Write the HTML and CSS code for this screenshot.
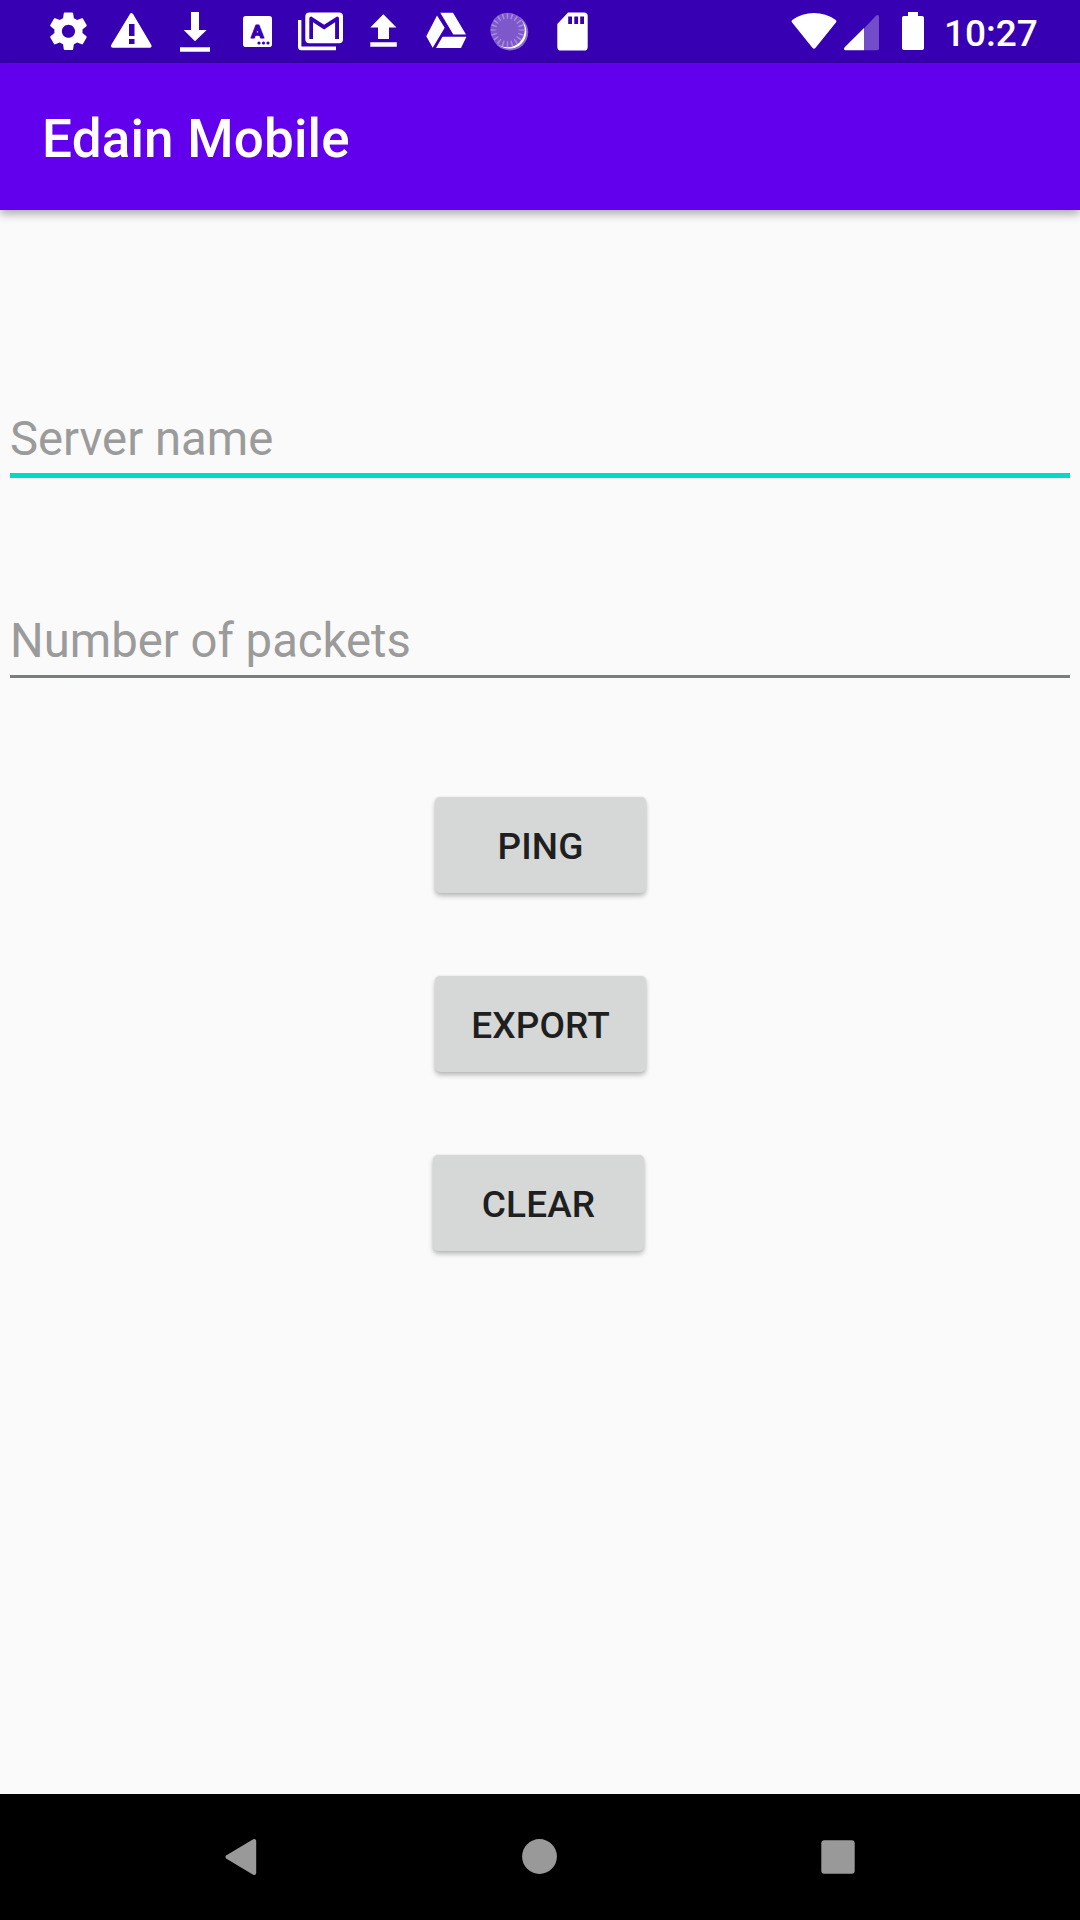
FILE: index.html
```html
<!DOCTYPE html>
<html lang="en">
<head>
<meta charset="utf-8">
<title>Edain Mobile</title>
<link rel="stylesheet" href="styles.css">
</head>
<body>
<div class="screen">
  <header class="status">
    <div class="notifications">
      <svg viewBox="0 0 63 63"><path transform="translate(8.9 8.7) scale(1.88)" d="M19.43 12.98c.04-.32.07-.64.07-.98s-.03-.66-.07-.98l2.11-1.65c.19-.15.24-.42.12-.64l-2-3.46c-.12-.22-.39-.3-.61-.22l-2.49 1c-.52-.4-1.08-.73-1.69-.98l-.38-2.65C14.46 2.18 14.25 2 14 2h-4c-.25 0-.46.18-.49.42l-.38 2.65c-.61.25-1.17.59-1.69.98l-2.49-1c-.23-.09-.49 0-.61.22l-2 3.46c-.13.22-.07.49.12.64l2.11 1.65c-.04.32-.07.65-.07.98s.03.66.07.98l-2.11 1.65c-.19.15-.24.42-.12.64l2 3.46c.12.22.39.3.61.22l2.49-1c.52.4 1.08.73 1.69.98l.38 2.65c.03.24.24.42.49.42h4c.25 0 .46-.18.49-.42l.38-2.65c.61-.25 1.17-.59 1.69-.98l2.49 1c.23.09.49 0 .61-.22l2-3.46c.12-.22.07-.49-.12-.64l-2.11-1.65zM12 15.5c-1.93 0-3.5-1.57-3.5-3.5s1.57-3.5 3.5-3.5 3.5 1.57 3.5 3.5-1.57 3.5-3.5 3.5z"/></svg>
      <svg viewBox="0 0 63 63"><path class="rounded" d="M31.5 15 49.8 46H12.7Z"/><path class="cut" d="M29 24h5.5v12H29zM29 39h5.5v5H29z"/></svg>
      <svg viewBox="0 0 63 63"><path d="M28 12h8v18h7.7L32 41.3 20.7 30H28zM17 47.3h30v4.4H17z"/></svg>
      <svg viewBox="0 0 63 63"><rect x="17" y="16" width="29" height="31" rx="2.8"/><text class="badge-letter" x="31.5" y="38" text-anchor="middle">A</text><g class="cut"><circle cx="33" cy="43" r="1.6"/><circle cx="37.5" cy="43" r="1.6"/><circle cx="42" cy="43" r="1.6"/></g></svg>
      <svg viewBox="0 0 63 63"><rect x="16.3" y="12.4" width="37.7" height="30.8" rx="4"/><path class="cut" d="M20.3 39V18.5q0-2 2-2L35.1 24.7 48 16.5q2 0 2 2V39H46.1V22.2L35.1 29.4 24 22.2V39Z"/><path d="M9 20h3.4v26.4H47v3.9H12.5Q9 50.3 9 46.8Z"/></svg>
      <svg viewBox="0 0 63 63"><path d="M31.3 14.3 44.5 27.5H37V39H26V27.5H18.3zM18.3 42.3h26.5v4.4H18.3z"/></svg>
      <svg viewBox="0 0 63 63"><path d="M22 15.5 29.7 27.7 17.7 47.8 11.3 36.3zM25.3 12.7H38L51 34.5H38.3zM27.5 36.8H51.5L46 48H21z"/></svg>
      <svg viewBox="0 0 63 63"><circle class="moon-halo" cx="32" cy="32.3" r="18.2"/><circle cx="31.5" cy="31.8" r="16.8"/><circle class="moon" cx="29.5" cy="30" r="17.2"/><circle class="ticks" cx="29.5" cy="30" r="14" pathLength="88"/></svg>
      <svg viewBox="0 0 63 63"><path d="M27 12.4H43q3.7 0 3.7 3.7V46.9q0 3.7-3.7 3.7H20q-3.7 0-3.7-3.7V24z"/><path class="cut" d="M27.2 16.5H31V24h-3.8zM33.3 16.5h3.8V24h-3.8zM39.2 16.5H43V24h-3.8z"/></svg>
    </div>
    <div class="system">
      <svg class="wifi" viewBox="0 0 46 63"><path d="M1.1 22.6Q-.1 20.9 1.6 19.8 11 13 23 13T44.4 19.8Q46.1 20.9 44.9 22.6L24.6 47.8Q23 49.9 21.4 47.8Z"/></svg>
      <svg class="signal" viewBox="0 0 35 63"><path class="faint" d="M20 28.4 32.2 15.6Q35 13.5 35 17.5V48.5q0 1.7-1.7 1.7H20z"/><path d="M20 28V50.2H1.8Q-1.2 49.8.7 47.2Z"/></svg>
      <svg class="battery" viewBox="0 0 22 63"><path d="M6 12H16v4h4q2 0 2 2V48q0 2-2 2H2q-2 0-2-2V18q0-2 2-2H6z"/></svg>
      <span class="clock">10:27</span>
    </div>
  </header>
  <div class="appbar"><h1>Edain Mobile</h1></div>
  <main>
    <div class="field focused">Server name</div>
    <div class="field packets">Number of packets</div>
    <div class="actions">
      <button>PING</button>
      <button>EXPORT</button>
      <button class="clear">CLEAR</button>
    </div>
  </main>
  <nav>
    <svg viewBox="0 0 126 126"><path class="back" d="M49.5 63 76.2 47V79Z"/></svg>
    <svg viewBox="0 0 126 126"><circle cx="62.5" cy="62.5" r="17.4"/></svg>
    <svg viewBox="0 0 126 126"><rect x="46.3" y="46.3" width="33.4" height="33.4" rx="3"/></svg>
  </nav>
</div>
</body>
</html>
```
FILE: styles.css
```css
* { box-sizing: border-box; }
body { margin: 0; font-family: Roboto, sans-serif; }
.screen { width: 1080px; height: 1920px; display: flex; flex-direction: column; background: #fafafa; overflow: hidden; }
svg { display: block; flex: none; fill: currentColor; }

.status { flex: none; height: 63px; display: flex; justify-content: space-between; padding: 0 42px 0 37px; background: #3700b3; color: #fff; }
.notifications { display: flex; }
.notifications svg { width: 63px; height: 63px; }
.rounded { stroke: #fff; stroke-width: 3.6px; stroke-linejoin: round; }
.cut { fill: #3700b3; }
.badge-letter { font: 700 19px Roboto, sans-serif; fill: #3700b3; stroke: #3700b3; stroke-width: 1.2px; stroke-linejoin: round; }
.moon-halo { fill: #8c6ad0; }
.moon { fill: #7e57cb; }
.ticks { fill: none; stroke: #a78bdc; stroke-width: 5.5px; stroke-dasharray: 1.5 2.9; stroke-dashoffset: .75; }
.system { display: flex; }
.system svg { height: 63px; }
.wifi { width: 46px; margin-right: 7px; }
.signal { width: 35px; margin-right: 23px; }
.battery { width: 22px; margin-right: 20px; }
.faint { fill: #734dc9; }
.clock { width: 94px; font-size: 37px; font-weight: 500; line-height: 67px; white-space: nowrap; }

.appbar { flex: none; height: 147px; display: flex; align-items: center; padding: 5px 0 0 42px; background: #6200ee; color: #fff; box-shadow: 0 4px 9px rgba(0,0,0,.32); }
h1 { margin: 0; font-size: 53px; font-weight: 500; line-height: 62px; letter-spacing: .18px; }

main { flex: 1; padding: 192px 10px 0; }
.field { height: 76px; padding-top: 9px; margin-bottom: 124px; font-size: 47.25px; line-height: 56px; color: #9b9b9b; border-bottom: 3px solid #7c7e7d; }
.focused { border-bottom: 5px solid #03dac5; }
.packets { padding-top: 11px; margin-bottom: 119px; }
.actions { display: flex; flex-direction: column; align-items: center; gap: 83px; padding-left: 1px; }
button { width: 211px; height: 96px; padding: 2px 0 0; border: 0; border-radius: 5px; background: #d6d8d7; color: #1e1f1e; font: 500 37px/96px Roboto, sans-serif; letter-spacing: .1px; box-shadow: 0 3px 5px rgba(0,0,0,.26), 0 0 2px rgba(0,0,0,.1); }
.clear { margin-right: 4px; }

nav { flex: none; height: 126px; display: grid; grid-template-columns: repeat(3, 298.5px); justify-content: center; justify-items: center; padding-right: 1px; background: #000; color: #999; }
nav svg { width: 126px; height: 126px; }
.back { stroke: #999; stroke-width: 4px; stroke-linejoin: round; }
```
